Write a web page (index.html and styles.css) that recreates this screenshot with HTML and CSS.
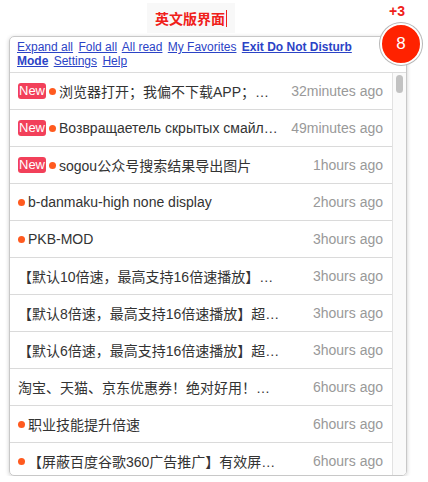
FILE: index.html
```html
<!DOCTYPE html>
<html lang="en">
<head>
    <meta charset="UTF-8">
    <meta name="viewport" content="width=device-width, initial-scale=1.0">
    <title>Notifications</title>
    <link rel="stylesheet" href="styles.css">
</head>
<body>
    <div class="topbar">
        <div class="title-box"><span class="title-text">英文版界面</span><span class="caret"></span></div>
    </div>
    <div class="plus">+3</div>
    <div class="count-badge">8</div>

    <div class="panel">
        <div class="actions">
            <a href="#">Expand all</a>
            <a href="#">Fold all</a>
            <a href="#">All read</a>
            <a href="#">My Favorites</a>
            <a href="#" class="strong">Exit Do Not Disturb Mode</a>
            <a href="#">Settings</a>
            <a href="#">Help</a>
        </div>
        <div class="list-wrap">
            <div class="list">
                <div class="row"><span class="new">New</span><span class="dot"></span><span class="name">浏览器打开；我偏不下载APP；我要用浏览器打开</span><span class="time">32minutes ago</span></div>
                <div class="row"><span class="new">New</span><span class="dot"></span><span class="name">Возвращаетель скрытых смайликов</span><span class="time">49minutes ago</span></div>
                <div class="row"><span class="new">New</span><span class="dot"></span><span class="name">sogou公众号搜索结果导出图片</span><span class="time">1hours ago</span></div>
                <div class="row"><span class="dot"></span><span class="name">b-danmaku-high none display</span><span class="time">2hours ago</span></div>
                <div class="row"><span class="dot"></span><span class="name">PKB-MOD</span><span class="time">3hours ago</span></div>
                <div class="row"><span class="name">【默认10倍速，最高支持16倍速播放】超级视频倍速</span><span class="time">3hours ago</span></div>
                <div class="row"><span class="name">【默认8倍速，最高支持16倍速播放】超级视频倍速</span><span class="time">3hours ago</span></div>
                <div class="row"><span class="name">【默认6倍速，最高支持16倍速播放】超级视频倍速</span><span class="time">3hours ago</span></div>
                <div class="row"><span class="name">淘宝、天猫、京东优惠券！绝对好用！（自动查询）</span><span class="time">6hours ago</span></div>
                <div class="row"><span class="dot"></span><span class="name">职业技能提升倍速</span><span class="time">6hours ago</span></div>
                <div class="row"><span class="dot"></span><span class="name">【屏蔽百度谷歌360广告推广】有效屏蔽广告</span><span class="time">6hours ago</span></div>
            </div>
            <div class="scrollbar"><div class="thumb"></div></div>
        </div>
    </div>
</body>
</html>
```

FILE: styles.css
```css
body {
    margin: 0;
    background: #fff;
    font-family: "Liberation Sans", "Noto Sans CJK SC", sans-serif;
    color: #333;
}
.topbar {
    height: 36px;
    display: flex;
    align-items: center;
    padding-left: 147px;
}
.title-box {
    width: 80px;
    height: 30px;
    padding-left: 8px;
    display: flex;
    align-items: center;
    background: #f8f8f8; /* faint input look */
}
.title-text {
    color: #f0201a;
    font-size: 14px;
    font-weight: bold;
}
.caret {
    width: 1px;
    height: 17px;
    margin-left: 1px;
    background: #f0201a;
}
.plus {
    position: absolute;
    left: 389px;
    top: 3px;
    color: #f0201a;
    font-size: 14px;
    font-weight: bold;
}
.count-badge {
    position: absolute;
    left: 380px;
    top: 23px;
    width: 38px;
    height: 38px;
    border: 2px solid #fff;
    border-radius: 50%;
    box-shadow: 0 0 0 1px #b8b8b8;
    background: #ff2200;
    color: #fff;
    font-size: 17px;
    display: flex;
    align-items: center;
    justify-content: center;
    z-index: 2;
}
.panel {
    margin-left: 9px;
    width: 396px;
    height: 438px;
    border: 1px solid #c8c8c8;
    border-radius: 5px;
    box-shadow: 0 1px 4px rgba(0, 0, 0, 0.2);
    display: flex;
    flex-direction: column;
    overflow: hidden;
}
.actions {
    padding: 3px 30px 4px 7px;
    font-size: 12px;
    line-height: 14px;
    border-bottom: 1px solid #dcdcdc;
}
.actions a {
    color: #2b43c6;
    margin-right: 2px;
}
.actions a.strong {
    font-weight: bold;
}
.list-wrap {
    flex: 1;
    min-height: 0;
    display: flex;
}
.list {
    flex: 1;
    min-width: 0;
    overflow: hidden;
}
.scrollbar {
    width: 14px;
    flex-shrink: 0;
    border-left: 1px solid #e2e2e2;
    background: #fafafa;
    padding: 2px 0 0 3px;
    box-sizing: border-box;
}
.thumb {
    width: 7px;
    height: 18px;
    border-radius: 4px;
    background: #c2c2c2;
}
.row {
    height: 36px;
    border-bottom: 1px solid #dadada;
    display: flex;
    align-items: center;
    padding: 0 9px 0 8px;
    font-size: 14px;
}
.new {
    background: #f2405a;
    color: #fff;
    font-size: 13px;
    line-height: 16px;
    padding: 0 1px;
    border-radius: 3px;
    margin-right: 3px;
}
.dot {
    width: 7px;
    height: 7px;
    border-radius: 50%;
    background: #ff5a1f;
    margin-right: 3px;
    flex-shrink: 0;
}
.name {
    flex: 1;
    min-width: 0;
    white-space: nowrap;
    overflow: hidden;
    text-overflow: ellipsis;
    color: #333;
}
.time {
    width: 100px;
    flex-shrink: 0;
    text-align: right;
    color: #999;
}
```
